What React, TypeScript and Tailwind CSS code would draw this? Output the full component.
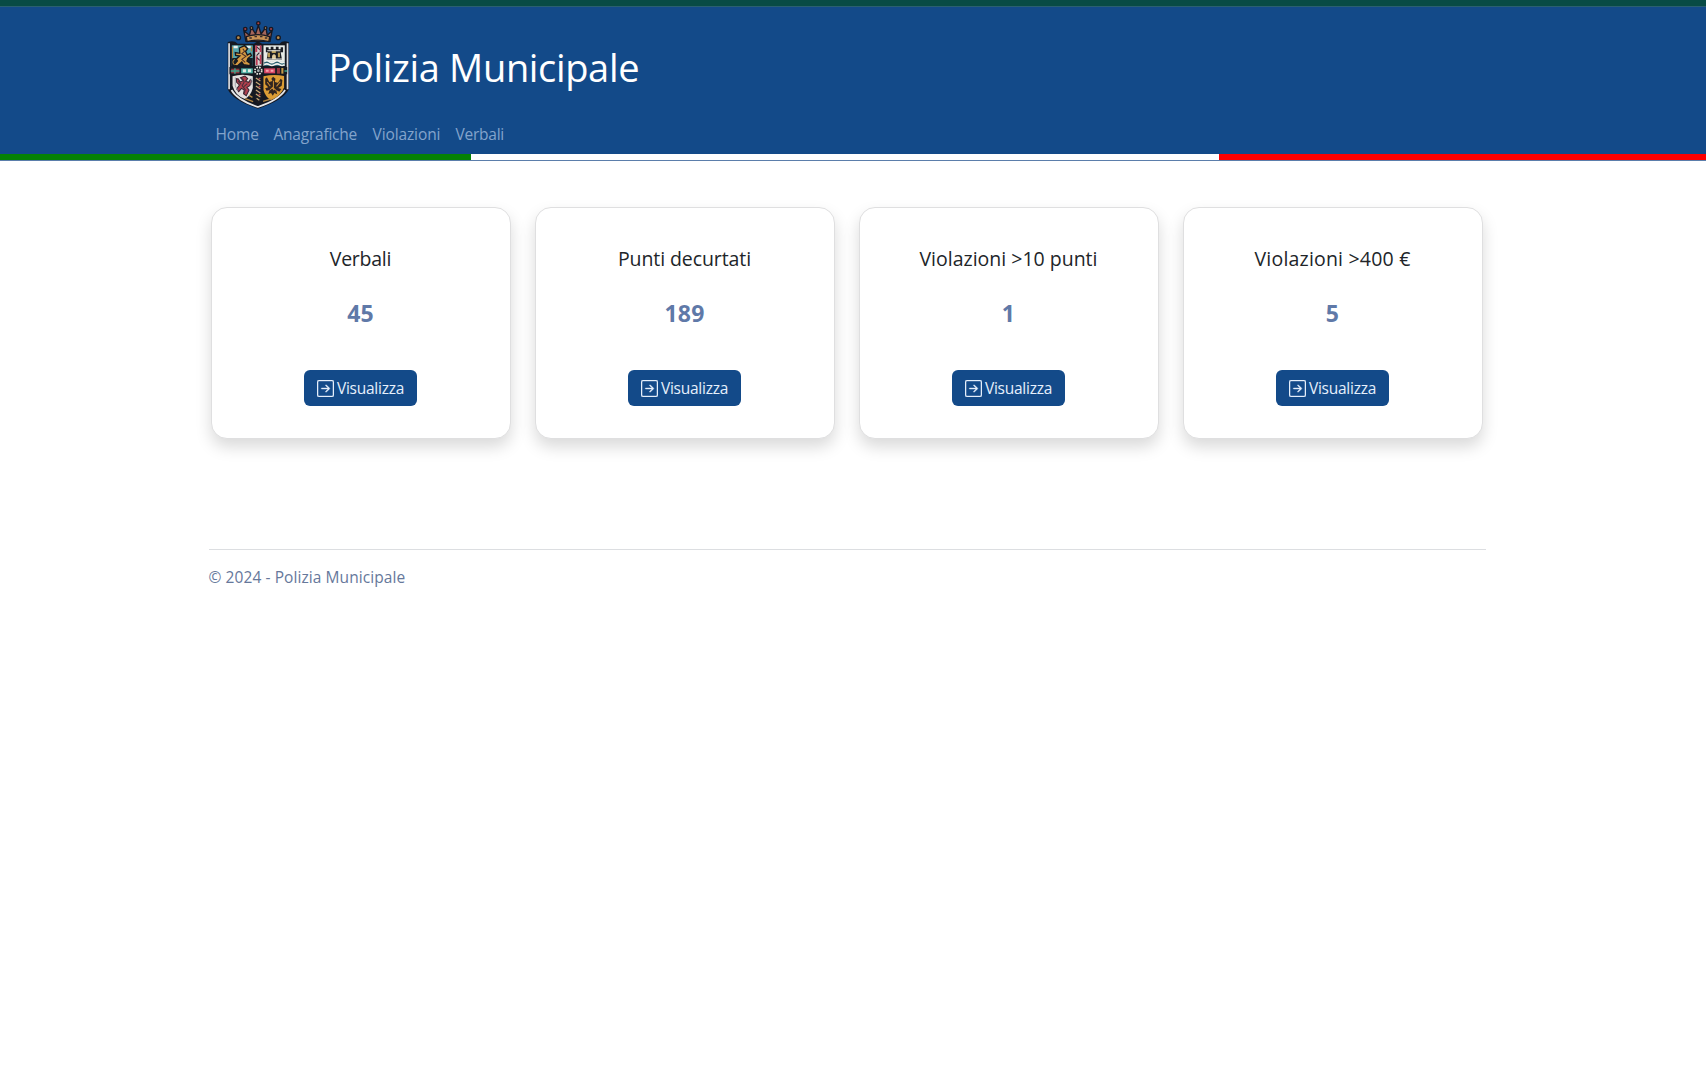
import { BsArrowRightSquare } from "react-icons/bs";

const links = [
  { label: "Home", style: "w-[58px] tracking-[-0.1px]" },
  { label: "Anagrafiche", style: "w-[99px] tracking-[-0.23px]" },
  { label: "Violazioni", style: "w-[83px] tracking-[-0.11px]" },
  { label: "Verbali", style: "tracking-[-0.25px]" },
];

const cards = [
  { title: "Verbali", value: "45", tracking: "tracking-[-0.25px]" },
  { title: "Punti decurtati", value: "189", tracking: "tracking-[-0.08px]" },
  { title: "Violazioni >10 punti", value: "1", tracking: "tracking-normal" },
  { title: "Violazioni >400 €", value: "5", tracking: "tracking-[0.2px]" },
];

function Crest() {
  return (
    <svg viewBox="50 28 192 270" preserveAspectRatio="none" className="mt-[13px] h-[90px] w-[66px]" aria-label="Stemma">
      {/* crown */}
      <g stroke="#171923" strokeWidth="4" strokeLinejoin="round">
        <path d="M108 92 L102 60 L118 74 L124 50 L136 70 L144 44 L152 70 L166 50 L170 74 L184 60 L178 92 Z" fill="#a5655a" />
        <path d="M109 78 Q143 66 177 78 L175 93 Q143 84 111 93 Z" fill="#c89255" />
        <circle cx="144" cy="38" r="5" fill="#b5423f" />
        <circle cx="106" cy="55" r="5" fill="#a5404a" />
        <circle cx="181" cy="55" r="5" fill="#a5404a" />
        <circle cx="124" cy="52" r="4" fill="#c9a06c" />
        <circle cx="165" cy="52" r="4" fill="#c9a06c" />
        <circle cx="86" cy="81" r="6" fill="#b78b4b" />
        <circle cx="202" cy="81" r="6" fill="#b78b4b" />
      </g>
      <path d="M118 82h7M133 78h7M149 78h7M163 82h7" stroke="#3b2a2b" strokeWidth="4" />
      {/* shield body */}
      <path d="M55 94 Q74 88 84 99 L131 99 L143 92 L155 99 L206 99 Q214 88 233 94 L233 236 Q216 270 143 294 Q70 270 55 236 Z" fill="#151821" />
      <path d="M59 98 V236 M229 98 V236" stroke="#d9dbe1" strokeWidth="5" fill="none" />
      <path d="M66 238 Q82 268 143 289 Q204 268 222 238" stroke="#e6e6e8" strokeWidth="5" fill="none" />
      {/* upper left quarter with lion */}
      <path d="M67 104 H128 V166 H67 Z" fill="#54a6ad" />
      <path d="M67 142 H128 V166 H67 Z" fill="#14202a" />
      <path d="M72 105h12v8H72zM110 105h12v8h-12z" fill="#e9efee" />
      <path d="M89 112 L104 105 L113 114 L107 122 L112 133 L121 128 L124 135 L114 143 L111 151 L122 159 L119 165 L101 162 L96 154 L83 166 L72 164 L83 151 L80 145 L90 136 L78 134 L77 126 L90 128 Z" fill="#d49a43" stroke="#17171d" strokeWidth="4" />
      <path d="M99 114 l5 8 l-8 7 l12 8 l-12 9 l10 9" stroke="#4d2f27" strokeWidth="3" fill="none" />
      <path d="M69 108v35M75 146q-10 8 0 17M124 108v14" stroke="#b5823a" strokeWidth="3" fill="none" />
      {/* upper right quarter with castle */}
      <path d="M159 104 H221 V166 H159 Z" fill="#e8ebe7" />
      <path d="M166 110h8v6h6v-8h8v8h7v-8h8v8h6v-6h7v15h-7l4 22h-45l4-22h-6z" fill="#1b1d24" />
      <path d="M171 126h7v14h-7zM183 119h12v8h-12zM201 126h6v14h-6z" fill="#b79c57" />
      <path d="M184 146v-11q6-8 11 0v11z" fill="#e2cc9c" />
      <path d="M170 120h38M166 145h50" stroke="#e9e9e3" strokeWidth="3" />
      <path d="M161 151q8-6 15 0t15 0t15 0t14 0v15h-59z" fill="#285e70" />
      <path d="M161 153q8-6 15 0t15 0t15 0t14 0M161 162q8-5 15 0t15 0t15 0t14 0" stroke="#f1f1ec" strokeWidth="5" fill="none" />
      {/* central pale */}
      <path d="M133 103h22v64h-22z" fill="#d9d0cf" stroke="#171923" strokeWidth="4" />
      <path d="M135 104h6v20h-6zM148 104h5v20h-5zM137 137h5v26h-5zM148 132h5v28h-5z" fill="#bd3c56" />
      <path d="M140 109l8 8M147 126l-8 9M140 141l8 8" stroke="#2b2530" strokeWidth="3" />
      {/* central fess */}
      <path d="M60 169h168v22H60z" fill="#161a22" />
      <path d="M65 174h24v14H65z" fill="#8e3940" />
      <path d="M94 173h34v15H94z" fill="#4bada3" />
      <path d="M99 176h9v9h-9zM114 176h9v9h-9z" fill="#e2eee4" />
      <path d="M161 173h32v15h-32z" fill="#d84765" />
      <path d="M166 177h8v6h-8zM180 177h8v6h-8z" fill="#f2a3ad" />
      <path d="M198 172h9v17h-9z" fill="#9b363e" />
      <path d="M211 172h6v17h-6z" fill="#c79a48" />
      <path d="M64 181h25M76 173v16M220 181h8" stroke="#3ca58e" strokeWidth="4" />
      {/* lower left quarter */}
      <path d="M69 197 Q98 188 128 197 V232 Q122 256 105 265 Q77 255 69 225 Z" fill="#e5e1df" />
      <path d="M92 201l13-5l8 8l-6 8l9 3l5-8l4 4l-6 14l-8 5l6 8l-8 17l-8-6l2-11l-8-5l-8 10l-6-8l8-12l-8-8l-1-11l6 1l5 9l9-4z" fill="#b2404d" stroke="#3b2430" strokeWidth="3" />
      <path d="M98 203l5 11l-6 11l9 12l-3 11M85 211l9 10M112 219l-10 9" stroke="#46303c" strokeWidth="3" fill="none" />
      <path d="M77 200v26l8 15M123 203v20" stroke="#989aa2" strokeWidth="2.5" fill="none" />
      {/* lower right quarter with eagle */}
      <path d="M159 197 Q190 189 219 196 V230 Q211 256 180 269 Q165 259 159 238 Z" fill="#dc9d35" />
      <path d="M187 198l7 6l-2 10l9 2l8-12l5 5l-2 16l-10 7l9 3l-6 8l-9-5l3 13l-8-4l-5 8l-5-8l-8 3l4-12l-9 2l-4-7l9-3l-9-9v-17l5-4l7 14l9-3l-3-7z" fill="#31251f" />
      <path d="M170 214l9 13M208 213l-11 14M188 210v29M178 238l8-8l9 9" stroke="#c98b32" strokeWidth="3" fill="none" />
      {/* lower pale */}
      <path d="M134 192h20v76l-11 14l-9-14z" fill="#1a1b23" />
      <path d="M137 202l13 9M137 214l13 9M137 226l13 9M137 238l13 9M137 250l13 9M139 263l8 6" stroke="#c9a875" strokeWidth="3.5" />
      <path d="M150 202l-5 4M150 226l-5 4M150 250l-5 4" stroke="#b8404d" strokeWidth="4" />
      <path d="M106 264l23 9M158 272l22-7M117 254l10 6" stroke="#b48742" strokeWidth="4" />
      {/* central boss */}
      <circle cx="144" cy="180" r="15" fill="#171a22" />
      <circle cx="144" cy="180" r="10" fill="none" stroke="#e7e3dc" strokeWidth="5" strokeDasharray="5 3" />
      <circle cx="144" cy="180" r="4" fill="#a8adb0" />
    </svg>
  );
}

export default function App() {
  return (
    <div className="min-h-screen bg-white font-['Open_Sans',sans-serif] text-[15.5px] leading-6 text-[#212529]">
      <header className="bg-[#134a89]">
        <div className="h-[7px] border-b border-[#2a5f70] bg-[#084b45]" />
        <div className="pr-3">
          <div className="mx-auto w-[1277px]">
            <div className="flex h-[107px] items-start pl-[17px]">
              <Crest />
              <h1 className="mt-[37px] ml-[37px] text-[38px] leading-[46px] tracking-[-0.34px] text-white">Polizia Municipale</h1>
            </div>
            <nav className="flex h-[40px] items-start pt-[8px] pl-[7px] text-[#83a4cc]">
              {links.map((l) => (
                <a key={l.label} href="#" className={l.style}>{l.label}</a>
              ))}
            </nav>
          </div>
        </div>
        <div className="flex h-[6px]">
          <div className="w-[471px] bg-[#058205]" />
          <div className="w-[748px] bg-white" />
          <div className="flex-1 bg-[#fe0000]" />
        </div>
        <div className="h-px bg-[#5b7eab]" />
      </header>

      <div className="pr-3">
        <div className="mx-auto w-[1277px]">
          <main className="grid grid-cols-4 gap-6 pt-[46px] pr-[3px] pl-[2px]">
            {cards.map((c) => (
              <section key={c.title} className="flex h-[232px] flex-col items-center rounded-[16px] border border-[#dfdfe0] bg-white pt-[39px] shadow-[0_8px_16px_rgba(0,0,0,0.15)]">
                <h2 className={`text-[19.5px] leading-6 whitespace-nowrap ${c.tracking}`}>{c.title}</h2>
                <p className="mt-[28px] text-[23px] leading-7 font-bold tracking-[0.2px] text-[#5f79a8]">{c.value}</p>
                <button className="mt-[43px] flex h-[36px] w-[113px] items-center justify-center gap-[3px] rounded-[6px] bg-[#134a89] text-[#e6f0fc]">
                  <BsArrowRightSquare className="size-[17px] stroke-current stroke-[0.35px]" />
                  <span className="tracking-[-0.25px]">Visualizza</span>
                </button>
              </section>
            ))}
          </main>
          <footer className="mt-[110px] border-t border-[#dcdee1] pt-[15px] tracking-[0.08px] text-[#66789b]">© 2024 - Polizia Municipale</footer>
        </div>
      </div>
    </div>
  );
}
